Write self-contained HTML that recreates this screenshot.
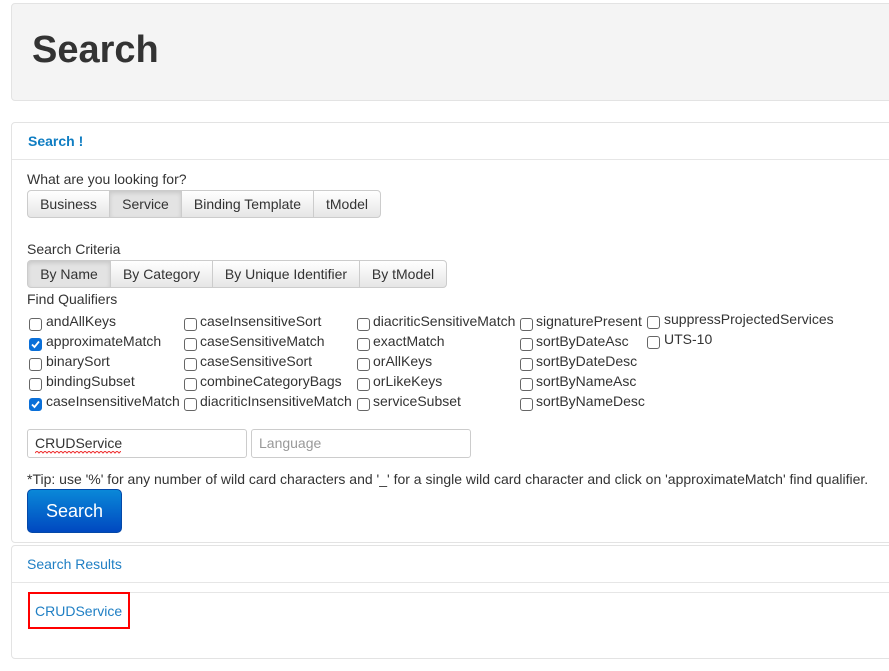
<!DOCTYPE html>
<html><head><meta charset="utf-8">
<style>
*{box-sizing:border-box;margin:0;padding:0}
body{width:889px;height:671px;background:#fff;font-family:"Liberation Sans",Arial,sans-serif;font-size:14px;color:#333;position:relative;overflow:hidden}
.a{position:absolute;white-space:nowrap}
.hero{left:11px;top:3px;width:890px;height:98px;background:#f4f4f4;border:1px solid #e3e3e3;border-radius:4px}
.panel{left:11px;width:890px;border:1px solid #e3e3e3;border-radius:4px;background:#fff}
.line{height:1px;background:#e6e6e6;left:12px;width:880px}
.btn{position:absolute;height:28px;line-height:26px;text-align:center;border:1px solid #ccc;background:linear-gradient(#fff,#e6e6e6);font-size:14px;color:#333}
.act{background:#e3e3e3;box-shadow:inset 0 2px 4px rgba(0,0,0,.12)}
.cb{position:absolute;width:13px;height:13px;border:1px solid #666;border-radius:3px;background:#fff}
.ck{background:#0a6fd8;border-color:#0a6fd8}
.lbl{position:absolute;font-size:14px;color:#333;white-space:nowrap}
.inp{position:absolute;height:29px;border:1px solid #ccc;border-radius:3px;background:#fff;font-size:14px;line-height:27px;padding-left:7px}
</style></head><body>
<div class="a hero"></div>
<div class="a" style="left:32px;top:29px;font-size:38px;font-weight:bold;color:#333">Search</div>

<div class="a panel" style="top:122px;height:421px"></div>
<div class="a" style="left:28px;top:133px;font-weight:bold;color:#0f7dc2;font-size:14px">Search !</div>
<div class="a line" style="top:159px"></div>
<div class="a" style="left:27px;top:171px">What are you looking for?</div>
<div class="btn" style="left:27px;top:190px;width:83px;border-radius:4px 0 0 4px">Business</div>
<div class="btn act" style="left:109px;top:190px;width:73px">Service</div>
<div class="btn" style="left:181px;top:190px;width:133px">Binding Template</div>
<div class="btn" style="left:313px;top:190px;width:68px;border-radius:0 4px 4px 0">tModel</div>

<div class="a" style="left:27px;top:241px">Search Criteria</div>
<div class="btn act" style="left:27px;top:260px;width:84px;border-radius:4px 0 0 4px">By Name</div>
<div class="btn" style="left:110px;top:260px;width:103px">By Category</div>
<div class="btn" style="left:212px;top:260px;width:148px">By Unique Identifier</div>
<div class="btn" style="left:359px;top:260px;width:88px;border-radius:0 4px 4px 0">By tModel</div>
<div class="a" style="left:27px;top:291px">Find Qualifiers</div>

<div class="cb" style="left:29px;top:318px"></div><div class="lbl" style="left:46px;top:313px">andAllKeys</div>
<div class="cb ck" style="left:29px;top:338px"><svg width="11" height="11" viewBox="0 0 11 11" style="position:absolute;left:0;top:0"><path d="M2 5.5L4.5 8L9 2.5" stroke="#fff" stroke-width="1.8" fill="none"/></svg></div><div class="lbl" style="left:46px;top:333px">approximateMatch</div>
<div class="cb" style="left:29px;top:358px"></div><div class="lbl" style="left:46px;top:353px">binarySort</div>
<div class="cb" style="left:29px;top:378px"></div><div class="lbl" style="left:46px;top:373px">bindingSubset</div>
<div class="cb ck" style="left:29px;top:398px"><svg width="11" height="11" viewBox="0 0 11 11" style="position:absolute;left:0;top:0"><path d="M2 5.5L4.5 8L9 2.5" stroke="#fff" stroke-width="1.8" fill="none"/></svg></div><div class="lbl" style="left:46px;top:393px">caseInsensitiveMatch</div>

<div class="cb" style="left:184px;top:318px"></div><div class="lbl" style="left:200px;top:313px">caseInsensitiveSort</div>
<div class="cb" style="left:184px;top:338px"></div><div class="lbl" style="left:200px;top:333px">caseSensitiveMatch</div>
<div class="cb" style="left:184px;top:358px"></div><div class="lbl" style="left:200px;top:353px">caseSensitiveSort</div>
<div class="cb" style="left:184px;top:378px"></div><div class="lbl" style="left:200px;top:373px">combineCategoryBags</div>
<div class="cb" style="left:184px;top:398px"></div><div class="lbl" style="left:200px;top:393px">diacriticInsensitiveMatch</div>

<div class="cb" style="left:357px;top:318px"></div><div class="lbl" style="left:373px;top:313px">diacriticSensitiveMatch</div>
<div class="cb" style="left:357px;top:338px"></div><div class="lbl" style="left:373px;top:333px">exactMatch</div>
<div class="cb" style="left:357px;top:358px"></div><div class="lbl" style="left:373px;top:353px">orAllKeys</div>
<div class="cb" style="left:357px;top:378px"></div><div class="lbl" style="left:373px;top:373px">orLikeKeys</div>
<div class="cb" style="left:357px;top:398px"></div><div class="lbl" style="left:373px;top:393px">serviceSubset</div>

<div class="cb" style="left:520px;top:318px"></div><div class="lbl" style="left:536px;top:313px">signaturePresent</div>
<div class="cb" style="left:520px;top:338px"></div><div class="lbl" style="left:536px;top:333px">sortByDateAsc</div>
<div class="cb" style="left:520px;top:358px"></div><div class="lbl" style="left:536px;top:353px">sortByDateDesc</div>
<div class="cb" style="left:520px;top:378px"></div><div class="lbl" style="left:536px;top:373px">sortByNameAsc</div>
<div class="cb" style="left:520px;top:398px"></div><div class="lbl" style="left:536px;top:393px">sortByNameDesc</div>

<div class="cb" style="left:647px;top:316px"></div><div class="lbl" style="left:664px;top:311px">suppressProjectedServices</div>
<div class="cb" style="left:647px;top:336px"></div><div class="lbl" style="left:664px;top:331px">UTS-10</div>

<div class="inp" style="left:27px;top:429px;width:220px">CRUDService<svg width="86" height="4" style="position:absolute;left:7px;top:21px"><path d="M0 2 L2 0 L4 2 L6 0 L8 2 L10 0 L12 2 L14 0 L16 2 L18 0 L20 2 L22 0 L24 2 L26 0 L28 2 L30 0 L32 2 L34 0 L36 2 L38 0 L40 2 L42 0 L44 2 L46 0 L48 2 L50 0 L52 2 L54 0 L56 2 L58 0 L60 2 L62 0 L64 2 L66 0 L68 2 L70 0 L72 2 L74 0 L76 2 L78 0 L80 2 L82 0 L84 2 L86 0" stroke="#e33" stroke-width="1" fill="none"/></svg></div>
<div class="inp" style="left:251px;top:429px;width:220px;color:#999">Language</div>

<div class="a" style="left:27px;top:471px">*Tip: use '%' for any number of wild card characters and '_' for a single wild card character and click on 'approximateMatch' find qualifier.</div>
<div class="a" style="left:27px;top:489px;width:95px;height:44px;border-radius:5px;background:linear-gradient(#0a88d8,#0048c0);border:1px solid #0448a8;color:#fff;font-size:18px;text-align:center;line-height:42px">Search</div>

<div class="a panel" style="top:545px;height:114px"></div>
<div class="a" style="left:27px;top:556px;color:#1f7fc4">Search Results</div>
<div class="a line" style="top:582px"></div>
<div class="a line" style="top:592px;left:28px"></div>
<div class="a" style="left:28px;top:592px;width:102px;height:37px;border:2px solid #f00"></div>
<div class="a" style="left:35px;top:603px;color:#1f7fc4">CRUDService</div>
</body></html>
